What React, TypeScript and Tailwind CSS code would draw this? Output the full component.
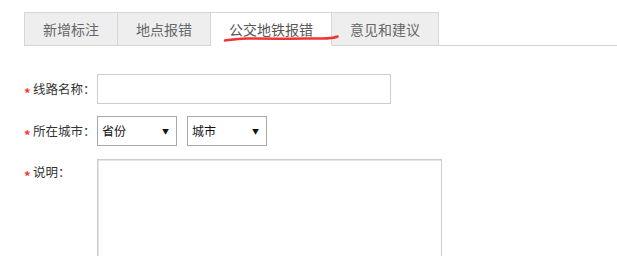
import React from "react";

const font = { fontFamily: '"Microsoft YaHei", "Noto Sans CJK SC", "Noto Sans", sans-serif' };

function Tab({ label, active, first }: { label: string; active?: boolean; first?: boolean }) {
  return (
    <div
      className={
        "h-[34px] px-[18px] flex items-center text-[14px] border-t border-r border-[#d6d6d6] " +
        (first ? "border-l " : "") +
        (active ? "bg-white border-b border-b-white text-[#555]" : "bg-[#eeeeee] border-b text-[#666]")
      }
    >
      {label}
    </div>
  );
}

function Label({ text }: { text: string }) {
  return (
    <div className="w-[73px] shrink-0 flex items-center text-[12.5px] text-[#333]">
      <span className="text-[#f33] text-[13px] font-bold w-[9px] leading-none translate-y-[3px]">*</span>
      <span>{text}</span>
    </div>
  );
}

function Select({ text }: { text: string }) {
  return (
    <div className="w-[80px] h-[30px] border border-[#a8a8a8] bg-white flex items-center justify-between pl-[4px] pr-[7px] text-[12px] text-[#111]">
      <span>{text}</span>
      <span className="text-[7px] leading-none">▼</span>
    </div>
  );
}

export default function App() {
  return (
    <div className="w-[617px] h-[256px] bg-white overflow-hidden relative" style={font}>
      <div className="pt-3 pl-6 flex">
        <Tab label="新增标注" first />
        <Tab label="地点报错" />
        <Tab label="公交地铁报错" active />
        <Tab label="意见和建议" />
        <div className="flex-1 border-b border-[#d6d6d6]" />
      </div>
      <svg className="absolute left-0 top-0 pointer-events-none" width="617" height="60" viewBox="0 0 617 60">
        <path
          d="M225 40.5 C232 39.5 238 38.2 248 38.4 C270 38.8 300 38.6 322 38.6 C330 38.5 334 38 337.5 36.5"
          fill="none"
          stroke="#f03434"
          strokeWidth="2.5"
          strokeLinecap="round"
        />
      </svg>
      <div className="pl-6 mt-[28px] flex flex-col">
        <div className="flex items-center h-[30px]">
          <Label text="线路名称：" />
          <div className="w-[294px] h-[30px] border border-[#cccccc] bg-white" />
        </div>
        <div className="flex items-center h-[30px] mt-3">
          <Label text="所在城市：" />
          <div className="flex gap-[10px]">
            <Select text="省份" />
            <Select text="城市" />
          </div>
        </div>
        <div className="flex items-start mt-[13px]">
          <div className="h-[26px] flex items-center">
            <Label text="说明：" />
          </div>
          <div className="w-[345px] h-[120px] border border-[#cccccc] shadow-[inset_1px_1px_0_#e4e4e4] bg-white" />
        </div>
      </div>
    </div>
  );
}
